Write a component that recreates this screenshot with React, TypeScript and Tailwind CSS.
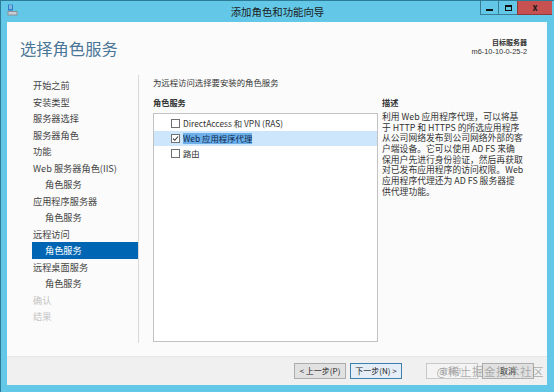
import React from "react";

const navItems = [
  { label: "开始之前" },
  { label: "安装类型" },
  { label: "服务器选择" },
  { label: "服务器角色" },
  { label: "功能" },
  { label: "Web 服务器角色(IIS)" },
  { label: "角色服务", sub: true },
  { label: "应用程序服务器" },
  { label: "角色服务", sub: true },
  { label: "远程访问" },
  { label: "角色服务", sub: true, active: true },
  { label: "远程桌面服务" },
  { label: "角色服务", sub: true },
  { label: "确认", dim: true },
  { label: "结果", dim: true },
];

const descLines = [
  "利用 Web 应用程序代理，可以将基",
  "于 HTTP 和 HTTPS 的所选应用程序",
  "从公司网络发布到公司网络外部的客",
  "户端设备。它可以使用 AD FS 来确",
  "保用户先进行身份验证，然后再获取",
  "对已发布应用程序的访问权限。Web",
  "应用程序代理还为 AD FS 服务器提",
  "供代理功能。",
];

function Checkbox({ checked }: { checked?: boolean }) {
  return (
    <div className="w-[9px] h-[9px] border border-[#707070] bg-white flex items-center justify-center shrink-0">
      {checked && (
        <svg width="7" height="7" viewBox="0 0 7 7">
          <path d="M1 3.6 L2.8 5.3 L6 1.5" stroke="#333" strokeWidth="1.1" fill="none" />
        </svg>
      )}
    </div>
  );
}

function WindowIcon() {
  return (
    <svg width="11" height="12" viewBox="0 0 11 12">
      <rect x="1" y="0.5" width="5" height="6" fill="#2f7fc8" />
      <rect x="2" y="1.5" width="3" height="1" fill="#d8ecff" />
      <rect x="2" y="3.5" width="3" height="1" fill="#d8ecff" />
      <rect x="0.5" y="7" width="10" height="4.5" fill="#8a8f96" />
      <rect x="1.5" y="8" width="8" height="2.5" fill="#c9ced4" />
    </svg>
  );
}

function NavItem({ label, sub, active, dim }: { label: string; sub?: boolean; active?: boolean; dim?: boolean }) {
  return (
    <div
      className={
        active
          ? "h-[16.5px] leading-[16.5px] ml-[25px] bg-[#0066b4] text-white whitespace-nowrap"
          : dim
          ? "h-[16.5px] leading-[16.5px] ml-[25px] text-[#c4c4c4] whitespace-nowrap"
          : "h-[16.5px] leading-[16.5px] ml-[25px] text-[#444] whitespace-nowrap"
      }
    >
      <span className={sub ? "pl-[13px]" : "pl-[1px]"}>{label}</span>
    </div>
  );
}

function Button({ children, variant }: { children: React.ReactNode; variant?: "default" | "disabled" }) {
  const cls =
    variant === "default"
      ? "w-[52px] h-[16px] border border-[#3c7fb1] bg-[#e5eef7] text-[#222] text-[8px] leading-[14px] text-center"
      : variant === "disabled"
      ? "w-[52px] h-[16px] border border-[#c8c8c8] bg-[#f4f4f4] text-[#b0b0b0] text-[8px] leading-[14px] text-center"
      : "w-[52px] h-[16px] border border-[#adadad] bg-[#e1e1e1] text-[#222] text-[8px] leading-[14px] text-center";
  return <div className={cls}>{children}</div>;
}

export default function App() {
  return (
    <div className="w-[554px] h-[392px] bg-[#63c8e7] flex flex-col border-t border-l border-[#2d7c97] font-['Noto_Sans_CJK_SC',sans-serif] overflow-hidden">
      {/* Title bar */}
      <div className="h-[21px] flex items-start shrink-0">
        <div className="w-[74px] pl-[6px] pt-[3px]">
          <WindowIcon />
        </div>
        <div className="flex-1 text-center text-[10.4px] leading-[21px] text-[#1b1b1b]">添加角色和功能向导</div>
        <div className="w-[74px] flex pr-[1px]">
          <div className="w-[18px] h-[14px] border-l border-b border-[#3a7e95] flex items-center justify-center">
            <div className="w-[7px] h-[2px] bg-[#111] mt-[4px]" />
          </div>
          <div className="w-[19px] h-[14px] border-l border-b border-[#3a7e95] flex items-center justify-center">
            <div className="w-[7px] h-[6px] border border-[#111] border-t-2" />
          </div>
          <div className="w-[35px] h-[14px] bg-[#c75050] border-l border-b border-[#8e3b3b] flex items-center justify-center text-[9px] font-bold leading-none text-[#1a1a1a]">
            x
          </div>
        </div>
      </div>

      {/* Body */}
      <div className="flex-1 flex flex-col mb-[7px] ml-[6px] mr-[7px]">
        <div className="flex-1 bg-[#fbfbfb] flex flex-col">
          {/* Header */}
          <div className="h-[52px] flex justify-between shrink-0">
            <div className="pl-[13px] pt-[15px] text-[16.3px] leading-[22px] text-[#4a7697]">选择角色服务</div>
            <div className="pr-[20px] pt-[15px] text-right text-[#333]">
              <div className="text-[7px] leading-[10px] font-bold">目标服务器</div>
              <div className="text-[7.4px] leading-[10px] font-['Liberation_Sans',sans-serif]">m6-10-10-0-25-2</div>
            </div>
          </div>

          {/* Main */}
          <div className="flex-1 flex">
            <div className="w-[132px] border-r border-[#d9d9d9] mt-[1px] mb-[13px] pt-[2px] text-[9.2px] shrink-0">
              {navItems.map((item, i) => (
                <NavItem key={i} label={item.label} sub={item.sub} active={item.active} dim={item.dim} />
              ))}
            </div>

            <div className="pl-[14px] pt-[2px] text-[#333]">
              <div className="h-[12px] leading-[12px] text-[8.4px]">为远程访问选择要安装的角色服务</div>
              <div className="mt-[8px] flex gap-[4px]">
                <div className="w-[225px]">
                  <div className="h-[12px] leading-[12px] text-[8.2px] font-bold">角色服务</div>
                  <div className="mt-[5px] h-[229px] border border-[#c2c2c2] bg-white pt-[2px] text-[8.4px]">
                    <div className="h-[15px] flex items-center pl-[17px] gap-[3px]">
                      <Checkbox />
                      <span>DirectAccess 和 VPN (RAS)</span>
                    </div>
                    <div className="h-[15px] flex items-center pl-[17px] gap-[3px] bg-[#cde6fb]">
                      <Checkbox checked />
                      <span className="bg-[#6aaeea] text-[#10284a] leading-[11px]">Web 应用程序代理</span>
                    </div>
                    <div className="h-[15px] flex items-center pl-[17px] gap-[3px]">
                      <Checkbox />
                      <span>路由</span>
                    </div>
                  </div>
                </div>
                <div className="w-[152px]">
                  <div className="h-[12px] leading-[12px] text-[8.2px] font-bold">描述</div>
                  <div className="mt-[4px] text-[8.8px] leading-[10.7px] whitespace-nowrap">
                    {descLines.map((l, i) => (
                      <div key={i} className="h-[10.7px]">{l}</div>
                    ))}
                  </div>
                </div>
              </div>
            </div>
          </div>
        </div>

        {/* Footer */}
        <div className="h-[29px] bg-[#f0f0f0] border-t border-[#e6e6e6] flex items-start pt-[6px] pr-[13px] justify-end relative shrink-0">
          <div className="flex gap-[4px]">
            <Button>&lt; 上一步(P)</Button>
            <Button variant="default">下一步(N) &gt;</Button>
          </div>
          <div className="flex gap-[4px] ml-[24px]">
            <Button variant="disabled">安装(I)</Button>
            <Button>取消</Button>
          </div>
          <div className="absolute right-[3px] top-[6px] text-[11.5px] leading-[16px] text-[#9a9a9a]/80 tracking-[0.5px]">
            @稀土掘金技术社区
          </div>
        </div>
      </div>
    </div>
  );
}
